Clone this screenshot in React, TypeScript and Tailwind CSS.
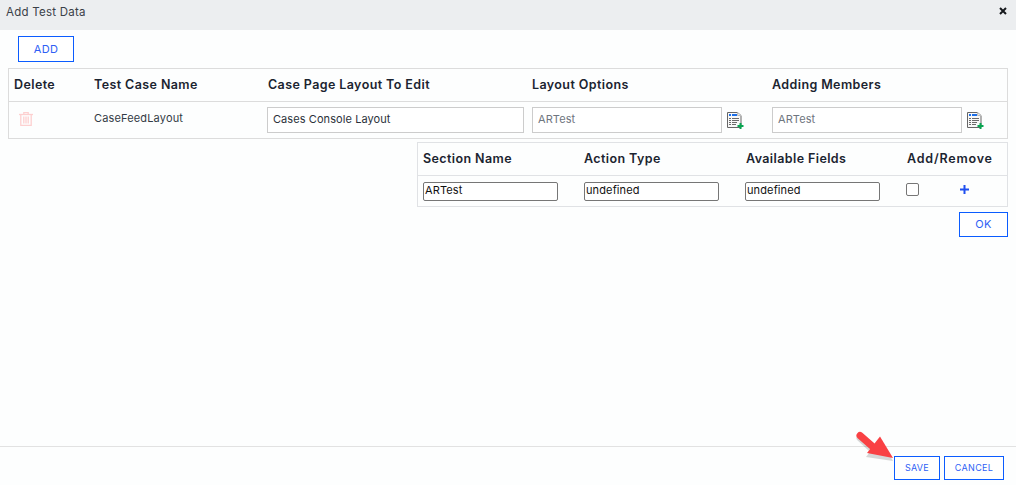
import React from "react";

const font = { fontFamily: "Inter, 'Open Sans', sans-serif" };

function SheetPlus() {
  return (
    <svg width="18" height="18" viewBox="0 0 18 18" className="shrink-0">
      <path d="M.5 1.5H10.5L14 4.5V16.5H.5Z" fill="#f8f8f8" stroke="#666666" strokeWidth="1" />
      <path d="M10.5 1.5V4.5H14" fill="#e8e8e8" stroke="#bdbdbd" strokeWidth="1" />
      <rect x="2" y="3" width="2" height="2" fill="#1d6fe8" />
      <rect x="5" y="3" width="5" height="2" fill="#1d6fe8" />
      <path d="M2 7.5H4M5 7.5H12M2 9.5H4M5 9.5H12M2 11.5H4M5 11.5H10M2 13.5H4M5 13.5H9" stroke="#6a6a6a" strokeWidth="1" />
      <path d="M13.5 12V18M10.5 15H16.5" stroke="#09a552" strokeWidth="2" />
    </svg>
  );
}

function Trash() {
  return (
    <svg width="14" height="14" viewBox="0 0 14 14" fill="none" stroke="#fdd0d0" strokeWidth="1.3">
      <path d="M0 2.5H14" />
      <path d="M4.8 2.5V.7H9.2V2.5" />
      <path d="M1.8 2.5V13.3H12.2V2.5" />
      <path d="M4.8 4.5V11.5M7 4.5V11.5M9.2 4.5V11.5" />
    </svg>
  );
}

function TextBox({ value, className }: { value: string; className: string }) {
  return (
    <div className={`flex h-[26px] items-center border border-[#cccccc] bg-white pb-[2px] pl-[5px] text-[11px] tracking-[0.08px] ${className}`}>
      {value}
    </div>
  );
}

function NativeBox({ value }: { value: string }) {
  return (
    <div className="flex h-[19px] w-[135px] items-center rounded-[2px] border border-[#767676] bg-white pb-[2px] pl-px text-[11px] tracking-[0.12px] text-[#111111]">
      {value}
    </div>
  );
}

function Outline({ label, className }: { label: string; className: string }) {
  return (
    <button className={`flex items-center justify-center border border-[#0b5cff] bg-white text-[#2f5ff5] ${className}`}>
      {label}
    </button>
  );
}

const th = "text-[12.5px] font-semibold tracking-[0.4px] text-[#1b2430]";

export default function App() {
  return (
    <div style={font} className="relative flex h-[485px] w-[1016px] flex-col overflow-hidden bg-[#fdfefe] text-[#333b45]">
      <div className="flex h-[30px] items-start justify-between bg-[#eceef0] pl-[6px] pr-[9px] pt-[4px]">
        <span className="text-[11.5px] leading-[16px] tracking-[0.25px] text-[#3a4048]">Add Test Data</span>
        <svg width="8" height="8" viewBox="0 0 8 8" stroke="#16191d" strokeWidth="2" className="mt-[3px]"><path d="M1 1L7 7M7 1L1 7" /></svg>
      </div>

      <div className="flex flex-1 flex-col px-[8px]">
        <div className="pl-[10px] pt-[6px]">
          <Outline label="ADD" className="h-[26px] w-[56px] text-[11px] tracking-[0.4px]" />
        </div>

        <div className="mt-[6px] h-[71px] border border-[#dcdcdc]">
          <div className="grid h-[33px] grid-cols-[80px_174px_264px_240px_1fr] items-center border-b border-[#dcdcdc] pl-[5px]">
            <span className={th}>Delete</span>
            <span className={th}>Test Case Name</span>
            <span className={th}>Case Page Layout To Edit</span>
            <span className={th}>Layout Options</span>
            <span className={th}>Adding Members</span>
          </div>
          <div className="grid h-[36px] grid-cols-[80px_174px_264px_240px_1fr] items-center pl-[5px]">
            <div className="pl-[5px] pb-[3px]"><Trash /></div>
            <span className="pb-[3px] text-[11px] tracking-[0.15px]">CaseFeedLayout</span>
            <div className="-ml-px"><TextBox value="Cases Console Layout" className="w-[257px] text-[#2b313a]" /></div>
            <div className="flex items-center">
              <TextBox value="ARTest" className="w-[190px] text-[#6f7680]" />
              <div className="ml-[5px]"><SheetPlus /></div>
            </div>
            <div className="flex items-center">
              <TextBox value="ARTest" className="w-[190px] text-[#6f7680]" />
              <div className="ml-[5px]"><SheetPlus /></div>
            </div>
          </div>
        </div>

        <div className="ml-[409px] mt-[3px] h-[65px] border border-[#e0e2e5]">
          <div className="grid h-[33px] grid-cols-[161px_161px_161px_1fr] items-center border-b border-[#e0e2e5] pl-[5px]">
            <span className={th}>Section Name</span>
            <span className={th}>Action Type</span>
            <span className={`${th} pl-px`}>Available Fields</span>
            <span className={`${th} pl-px tracking-[0.8px]`}>Add/Remove</span>
          </div>
          <div className="grid h-[30px] grid-cols-[161px_161px_161px_1fr] items-center pl-[5px]">
            <NativeBox value="ARTest" />
            <NativeBox value="undefined" />
            <NativeBox value="undefined" />
            <div className="flex items-center pb-[4px]">
              <div className="h-[13px] w-[13px] rounded-[2px] border border-[#767676] bg-white" />
              <svg width="9" height="9" viewBox="0 0 9 9" stroke="#1f4ff0" strokeWidth="2" className="ml-[41px]"><path d="M4.5 0V9M0 4.5H9" /></svg>
            </div>
          </div>
        </div>

        <div className="mt-[5px] flex justify-end">
          <Outline label="OK" className="h-[25px] w-[49px] text-[11px] tracking-[0.4px]" />
        </div>
      </div>

      <div className="flex h-[39px] justify-end gap-[4px] border-t border-[#e2e2e2] pr-[12px] pt-[9px]">
        <Outline label="SAVE" className="h-[24px] w-[46px] text-[9px] tracking-[0.3px]" />
        <Outline label="CANCEL" className="h-[24px] w-[60px] text-[9px] tracking-[0.3px]" />
      </div>

      <svg width="48" height="40" viewBox="0 0 48 40" className="absolute left-[852px] top-[428px]">
        <g opacity="0.15" transform="translate(0 2)">
          <path d="M8 8L20 19" stroke="#000" strokeWidth="7" strokeLinecap="round" />
          <path d="M28 9L41 31L14 27Z" fill="#000" />
        </g>
        <path d="M8 7.5L20 18" stroke="#f94144" strokeWidth="7" strokeLinecap="round" />
        <path d="M28 8.5L41 30L15 25Z" fill="#f94144" />
      </svg>
    </div>
  );
}
